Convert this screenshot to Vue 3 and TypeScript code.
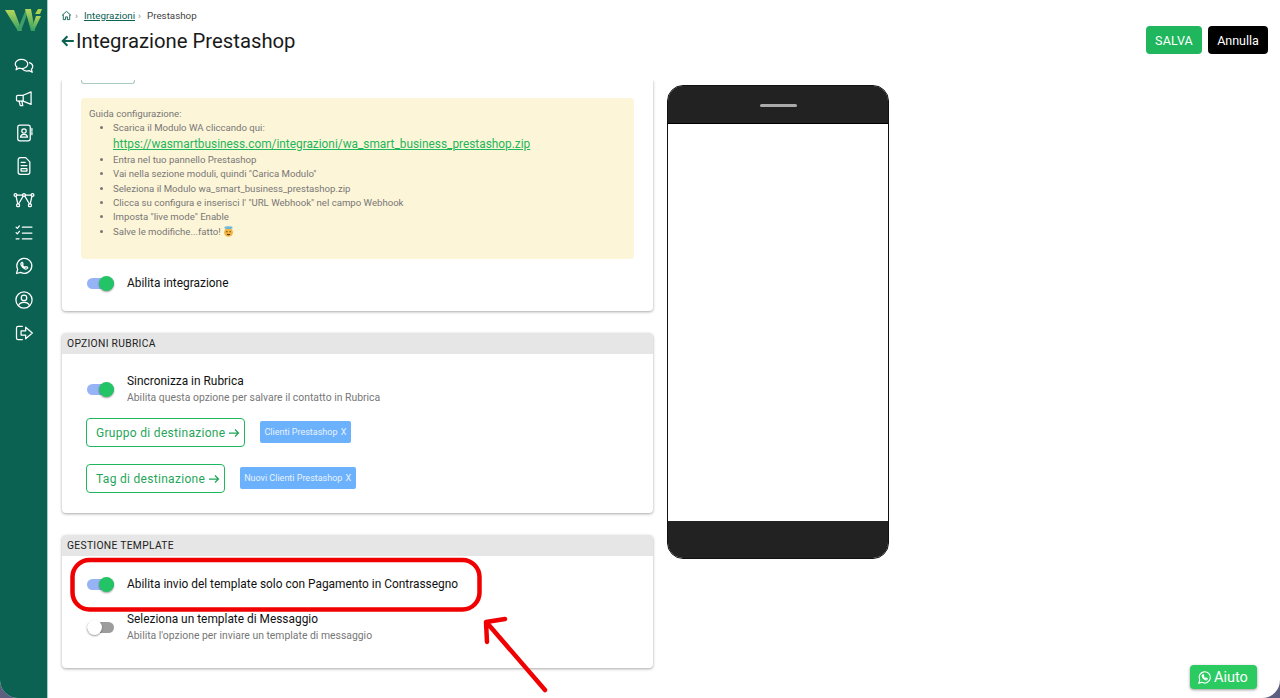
<script setup lang="ts">
const guide = [
  'Entra nel tuo pannello Prestashop',
  'Vai nella sezione moduli, quindi "Carica Modulo"',
  'Seleziona il Modulo wa_smart_business_prestashop.zip',
  'Clicca su configura e inserisci l\' "URL Webhook" nel campo Webhook',
  'Imposta "live mode" Enable',
]
</script>

<template>
  <div class="frame">
    <aside class="sidebar">
      <svg class="logo" viewBox="0 0 47 40" width="47" height="40">
        <defs>
          <linearGradient id="lg" x1="0" y1="0" x2="0" y2="1">
            <stop offset="0" stop-color="#b5d65a" />
            <stop offset="1" stop-color="#2f9f63" />
          </linearGradient>
        </defs>
        <path d="M5 10h9l8 21h-4z" fill="url(#lg)" />
        <path d="M17 31l9-22h3l-8 22z" fill="#3f9f68" />
        <path d="M25 9h6l4 22h-4z" fill="url(#lg)" />
        <path d="M31 31h3l7-15h-5z" fill="url(#lg)" />
        <path d="M35 14l3-5h4l-2 5z" fill="#a9d24f" />
      </svg>
      <nav class="nav">
        <!-- chat -->
        <svg viewBox="0 0 24 24"><path d="M1.500 9.500C1.500 6.500 4.800 4 9 4s7.500 2.500 7.500 5.500S13.200 15 9 15c-1 0-2-.1-2.900-.4L2.500 16.500l1-3.300C2.200 12.200 1.500 11 1.500 9.500z" /><path d="M18.500 8c2.400.8 4 2.600 4 4.700 0 1.300-.6 2.400-1.600 3.300l1 3.500-3.700-1.900c-.8.300-1.700.4-2.700.4-2.300 0-4.200-.9-5.300-2.300" /></svg>
        <!-- megaphone -->
        <svg viewBox="0 0 24 24"><path d="M20.500 3.500v15L11 14.500H4.500a1.500 1.500 0 0 1-1.500-1.500V9a1.500 1.500 0 0 1 1.500-1.500H11z" /><path d="M11 7.500v7M6 14.500l1.500 5.500h3L9.500 14.500" /></svg>
        <!-- contacts -->
        <svg viewBox="0 0 24 24"><rect x="4.500" y="2.500" width="15" height="19" rx="2.500" /><circle cx="12" cy="9.500" r="2.600" /><path d="M7.800 17c.3-2.500 2-3.500 4.200-3.500s3.900 1 4.200 3.500zM21.500 6.500v3M21.500 11v3" /></svg>
        <!-- document -->
        <svg viewBox="0 0 24 24"><path d="M5 4.500A2.500 2.500 0 0 1 7.500 2H14l5 5v12.500a2.500 2.500 0 0 1-2.500 2.500h-9A2.500 2.500 0 0 1 5 19.500z" /><path d="M8.500 7.500h5M8.500 11.500h7M8.500 15h7v3h-7z" /></svg>
        <!-- nodes -->
        <svg viewBox="0 0 24 24"><circle cx="12" cy="6" r="1.700" /><circle cx="1.800" cy="6" r="1.700" /><circle cx="22.200" cy="6" r="1.700" /><rect x="3.200" y="16.500" width="3.400" height="3.400" rx="1.100" /><rect x="17.400" y="16.500" width="3.400" height="3.400" rx="1.100" /><path d="M3.500 6h6.800M13.700 6h6.800M2.500 7.600l2 8.900M21.500 7.600l-2 8.900M11 7.400 5.600 16.500M13 7.400l5.400 9.100" /></svg>
        <!-- checklist -->
        <svg viewBox="0 0 24 24"><path d="M2.500 5 4 6.500 6.500 3.500M2.500 11.500 4 13 6.500 10M2.500 19H6M10 5h11.500M10 12h11.500M10 19h11.500" /></svg>
        <!-- whatsapp -->
        <svg viewBox="0 0 24 24"><path d="M3 21l1.400-5A9 9 0 1 1 8 19.700z" /><path d="M9 8c-.8.6-1 1.700-.5 2.800 1 2.200 2.700 3.800 4.800 4.700 1.200.4 2.300.1 2.900-.8l.2-1-2.200-1-.9 1c-1.300-.5-2.500-1.600-3.200-3l.8-1-.9-2.200z" /></svg>
        <!-- user -->
        <svg viewBox="0 0 24 24"><circle cx="12" cy="12" r="9.700" /><circle cx="12" cy="9.500" r="3.300" /><path d="M5.500 18.500c1-2.700 3.500-3.700 6.500-3.700s5.500 1 6.500 3.700" /></svg>
        <!-- logout -->
        <svg viewBox="0 0 24 24"><path d="M10 4H5a2 2 0 0 0-2 2v12a2 2 0 0 0 2 2h5" /><path d="M8.500 9.500H14V5l8 7-8 7v-4.500H8.500z" /></svg>
      </nav>
    </aside>

    <main class="page">
      <header class="topbar">
        <div>
          <div class="crumbs">
            <svg class="home" viewBox="0 0 24 24" width="11" height="11"><path d="M2 12 12 3l10 9M5 10v11h5v-6h4v6h5V10" /></svg>
            <span class="sep">›</span>
            <a class="crumb-link">Integrazioni</a>
            <span class="sep">›</span>
            <span class="crumb-current">Prestashop</span>
          </div>
          <h1 class="title">
            <svg viewBox="0 0 24 24" width="14" height="14"><path d="M22 12H3M11 4l-8 8 8 8" /></svg>
            Integrazione Prestashop
          </h1>
        </div>
        <div class="actions">
          <button class="btn save">SALVA</button>
          <button class="btn cancel">Annulla</button>
        </div>
      </header>

      <div class="content">
        <div class="column">
          <section class="card first">
            <div class="sliver"></div>
            <div class="guide">
              <div>Guida configurazione:</div>
              <ul>
                <li>
                  Scarica il Modulo WA cliccando qui:<br />
                  <a class="zip">https://wasmartbusiness.com/integrazioni/wa_smart_business_prestashop.zip</a>
                </li>
                <li v-for="line in guide" :key="line">{{ line }}</li>
                <li>
                  Salve le modifiche...fatto!
                  <svg class="emoji" viewBox="0 0 12 12" width="11" height="11">
                    <circle cx="6" cy="7" r="4.800" fill="#f2b544" />
                    <ellipse cx="6" cy="1.800" rx="4.500" ry="1.400" fill="#6fb7d8" />
                    <circle cx="4.200" cy="6.200" r=".7" fill="#5a3a10" />
                    <circle cx="7.800" cy="6.200" r=".7" fill="#5a3a10" />
                    <path d="M4 8.600h4a2 1.600 0 0 1-4 0z" fill="#5a3a10" />
                  </svg>
                </li>
              </ul>
            </div>
            <div class="switch-row single">
              <span class="switch on"></span>
              <span class="label">Abilita integrazione</span>
            </div>
          </section>

          <section class="card rubrica">
            <h2 class="card-head">OPZIONI RUBRICA</h2>
            <div class="switch-row">
              <span class="switch on"></span>
              <div>
                <div class="label">Sincronizza in Rubrica</div>
                <div class="hint">Abilita questa opzione per salvare il contatto in Rubrica</div>
              </div>
            </div>
            <div class="dest first-dest">
              <button class="outline">Gruppo di destinazione
                <svg viewBox="0 0 24 24" width="12" height="12"><path d="M2 12h19M14 5l7 7-7 7" /></svg>
              </button>
              <span class="tag">Clienti Prestashop <i>X</i></span>
            </div>
            <div class="dest">
              <button class="outline">Tag di destinazione
                <svg viewBox="0 0 24 24" width="12" height="12"><path d="M2 12h19M14 5l7 7-7 7" /></svg>
              </button>
              <span class="tag narrow">Nuovi Clienti Prestashop <i>X</i></span>
            </div>
          </section>

          <section class="card template">
            <h2 class="card-head">GESTIONE TEMPLATE</h2>
            <div class="switch-row cod">
              <span class="switch on"></span>
              <span class="label">Abilita invio del template solo con Pagamento in Contrassegno</span>
            </div>
            <div class="switch-row message">
              <span class="switch"></span>
              <div>
                <div class="label">Seleziona un template di Messaggio</div>
                <div class="hint">Abilita l'opzione per inviare un template di messaggio</div>
              </div>
            </div>
          </section>
        </div>

        <div class="phone">
          <div class="phone-top"><span></span></div>
          <div class="phone-screen"></div>
          <div class="phone-bottom"></div>
        </div>
      </div>

      <button class="help">
        <svg viewBox="0 0 24 24" width="15" height="15"><path d="M3 21l1.400-5A9 9 0 1 1 8 19.700z" /><path d="M9 8c-.8.6-1 1.700-.5 2.800 1 2.200 2.700 3.800 4.800 4.700 1.200.4 2.300.1 2.900-.8l.2-1-2.200-1-.9 1c-1.300-.5-2.500-1.600-3.200-3l.8-1-.9-2.200z" /></svg>
        Aiuto
      </button>

      <!-- hand drawn annotation laid over the page -->
      <svg class="markup" viewBox="0 0 1233 698" width="1233" height="698">
        <rect x="24.500" y="560" width="407" height="49.500" rx="17" />
        <path d="M497 690 440 624M439 642l-1-20 19-3" />
      </svg>
    </main>
  </div>
</template>

<style>
html,
body {
  margin: 0;
  background: #5d5f80;
}
</style>

<style scoped>
.frame {
  display: flex;
  width: 1280px;
  height: 698px;
  overflow: hidden;
  border-radius: 0 0 18px 18px;
  background: #fff;
  font-family: Roboto, "Liberation Sans", sans-serif;
  color: #111;
}

.sidebar {
  flex: 0 0 47px;
  background: #0b6152;
  border-right: 1px solid #9fd3c6;
  box-sizing: content-box;
  display: flex;
  flex-direction: column;
  align-items: center;
}

.nav {
  display: flex;
  flex-direction: column;
  align-items: center;
  gap: 13.4px;
  margin-top: 16px;
}

.nav svg {
  width: 20px;
  height: 20px;
  fill: none;
  stroke: #fff;
  stroke-width: 1.500;
  stroke-linejoin: round;
  stroke-linecap: round;
  overflow: visible;
}

.page {
  position: relative;
  flex: 1;
  min-width: 0;
  display: flex;
  flex-direction: column;
}

.topbar {
  flex: 0 0 80px;
  display: flex;
  justify-content: space-between;
  align-items: flex-start;
  padding: 9px 12px 0 13px;
  box-sizing: border-box;
}

.crumbs {
  display: flex;
  align-items: center;
  height: 12px;
  font-size: 9.800px;
  color: #444;
}

.home {
  fill: none;
  stroke: #0b6152;
  stroke-width: 2;
}

.sep {
  margin: 0 4px 0 3px;
  color: #888;
}

.crumb-link {
  margin-left: 2px;
  color: #0b6152;
  text-decoration: underline;
}

.crumb-current {
  margin-left: 2px;
}

.title {
  display: flex;
  align-items: center;
  gap: 1px;
  margin: 7px 0 0;
  font-size: 20.300px;
  font-weight: 400;
  line-height: 26px;
  color: #1a1a1a;
}

.title svg {
  fill: none;
  stroke: #0b6152;
  stroke-width: 3.500;
}

.actions {
  display: flex;
  gap: 6px;
  margin-top: 17px;
}

.btn {
  height: 28px;
  border: 0;
  border-radius: 4px;
  font: 12.500px Roboto, sans-serif;
  color: #fff;
}

.save {
  width: 56px;
  background: #1fb65d;
  letter-spacing: 0.2px;
}

.cancel {
  width: 60px;
  background: #000;
}

.content {
  flex: 1;
  min-height: 0;
  display: flex;
  gap: 14px;
  padding-left: 14px;
  overflow: hidden;
}

.column {
  flex: 0 0 591px;
  display: flex;
  flex-direction: column;
  gap: 22px;
}

.card {
  background: #fff;
  border-radius: 4px;
  box-shadow: 0 1px 3px rgba(0, 0, 0, 0.35);
}

.first {
  height: 231px;
  border-radius: 0 0 4px 4px;
  padding: 0 19px;
  box-sizing: border-box;
}

.sliver {
  width: 54px;
  height: 4px;
  box-sizing: border-box;
  border: 1px solid #a9c9c0;
  border-top: 0;
  border-radius: 0 0 3px 3px;
}

.guide {
  height: 161px;
  margin-top: 14px;
  padding: 9px 8px 0;
  box-sizing: border-box;
  background: #fdf5d7;
  border-radius: 4px;
  font-size: 9.600px;
  line-height: 14.400px;
  color: #777;
}

.guide ul {
  margin: 0;
  padding-left: 24px;
}

.zip {
  font-size: 11.850px;
  line-height: 17px;
  color: #1fb65d;
  text-decoration: underline;
}

.emoji {
  vertical-align: -2px;
}

.switch-row {
  display: flex;
  align-items: center;
  gap: 13px;
  padding-left: 6px;
}

.switch-row.single {
  margin-top: 17px;
}

.switch {
  position: relative;
  flex: 0 0 27px;
  height: 11px;
  border-radius: 6px;
  background: #9c9c9c;
}

.switch::after {
  content: "";
  position: absolute;
  left: 0;
  top: -2px;
  width: 15px;
  height: 15px;
  border-radius: 50%;
  background: #fff;
  box-shadow: 0 1px 2px rgba(0, 0, 0, 0.4);
}

.switch.on {
  background: #96b3f5;
}

.switch.on::after {
  left: 12px;
  background: #22c466;
}

.label {
  font-size: 11.900px;
  line-height: 14px;
  color: #111;
}

.hint {
  margin-top: 3px;
  font-size: 10.400px;
  line-height: 14px;
  color: #777;
}

.rubrica {
  height: 180px;
}

.card-head {
  margin: 0;
  height: 21px;
  padding-left: 5px;
  background: #e6e6e6;
  border-radius: 4px 4px 0 0;
  font-size: 10.300px;
  font-weight: 400;
  line-height: 21px;
  letter-spacing: 0.3px;
  color: #222;
}

.rubrica .switch-row {
  margin: 20px 0 0 19px;
}

.dest {
  display: flex;
  align-items: center;
  gap: 15px;
  margin: 17px 0 0 24px;
}

.first-dest {
  margin-top: 13px;
}

.outline {
  display: flex;
  align-items: center;
  gap: 3px;
  height: 29px;
  padding: 0 4px 0 9px;
  background: #fff;
  border: 1px solid #1fb65d;
  border-radius: 4px;
  font: 12px Roboto, sans-serif;
  letter-spacing: 0.3px;
  color: #1fa659;
}

.outline svg {
  fill: none;
  stroke: #1fa659;
  stroke-width: 2.500;
}

.tag {
  display: flex;
  align-items: center;
  justify-content: space-between;
  width: 91px;
  height: 22px;
  margin-top: -2px;
  padding: 0 4px;
  box-sizing: border-box;
  background: #6cb1fb;
  border-radius: 2px;
  font-size: 9px;
  color: #e8f2ff;
}

.tag.narrow {
  width: 116px;
}

.tag i {
  font-style: normal;
  font-size: 9px;
  margin-right: 1px;
}

.template {
  height: 133px;
}

.cod {
  margin: 0 0 0 19px;
  height: 56px;
}

.message {
  margin: 0 0 0 19px;
}

.phone {
  flex: 0 0 222px;
  display: flex;
  flex-direction: column;
  height: 474px;
  margin-top: 5px;
  box-sizing: border-box;
  border: 1px solid #111;
  border-radius: 16px;
  overflow: hidden;
  background: #fff;
}

.phone-top {
  flex: 0 0 38px;
  display: flex;
  justify-content: center;
  padding-top: 18px;
  box-sizing: border-box;
  background: #222;
  border-bottom: 1px solid #000;
}

.phone-bottom {
  flex: 0 0 37px;
  background: #222;
}

.phone-top span {
  width: 37px;
  height: 3px;
  background: #aaa;
  border-radius: 2px;
}

.phone-screen {
  flex: 1;
}

.help {
  position: absolute;
  right: 23px;
  bottom: 9px;
  display: flex;
  align-items: center;
  gap: 2px;
  width: 67px;
  height: 24px;
  padding: 0 0 0 7px;
  border: 0;
  border-radius: 4px;
  background: #2bcb62;
  box-shadow: 0 1px 3px rgba(0, 0, 0, 0.4);
  font: 14.500px Roboto, sans-serif;
  color: #fff;
}

.help svg {
  fill: none;
  stroke: #fff;
  stroke-width: 1.800;
}

.markup {
  position: absolute;
  left: 0;
  top: 0;
  pointer-events: none;
  fill: none;
  stroke: #f00000;
  stroke-width: 4.500;
  stroke-linecap: round;
  stroke-linejoin: round;
}
</style>
